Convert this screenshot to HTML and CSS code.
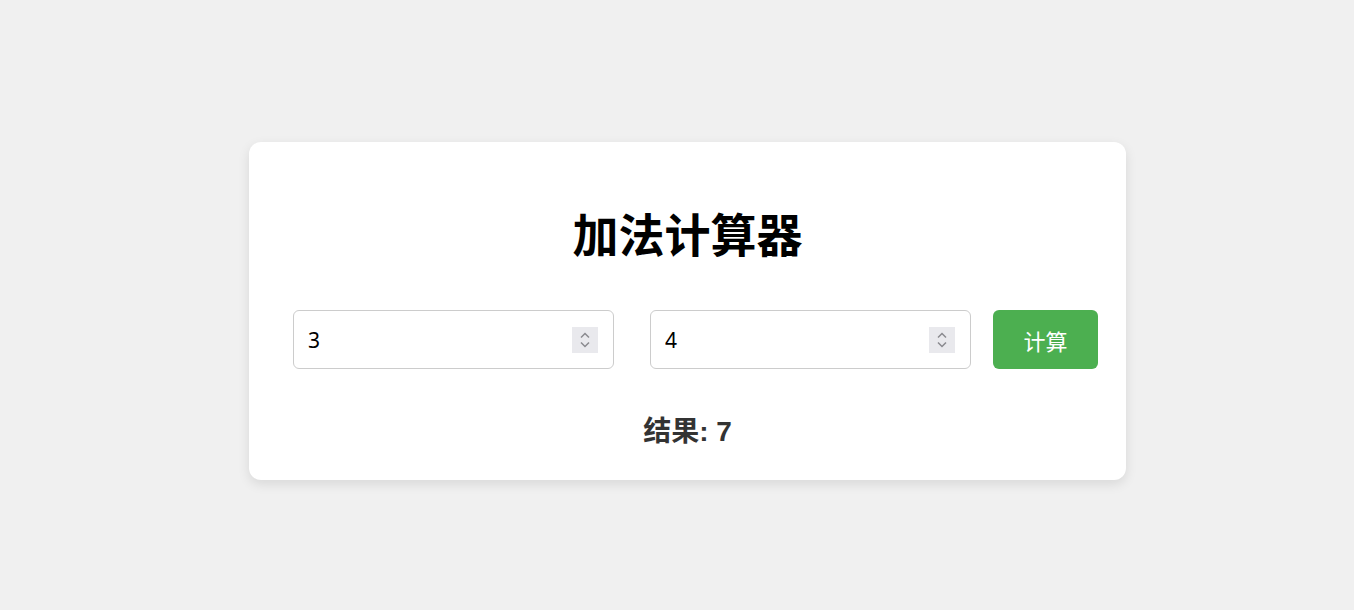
FILE: index.html
```html
<!DOCTYPE html>
<html lang="zh">
<head>
<meta charset="utf-8">
<title>加法计算器</title>
<link rel="stylesheet" href="styles.css">
</head>
<body>
<main class="page">
  <section class="card">
    <h1 class="title">加法计算器</h1>
    <div class="row">
      <div class="field">
        <input class="num" type="number" value="3">
        <span class="spin"><svg width="26" height="26" viewBox="0 0 26 26"><path d="M9 10.5 L13 6.5 L17 10.5" fill="none" stroke="#8a8a8f" stroke-width="1.5"/><path d="M9 15.5 L13 19.5 L17 15.5" fill="none" stroke="#8a8a8f" stroke-width="1.5"/></svg></span>
      </div>
      <div class="field field-second">
        <input class="num" type="number" value="4">
        <span class="spin"><svg width="26" height="26" viewBox="0 0 26 26"><path d="M9 10.5 L13 6.5 L17 10.5" fill="none" stroke="#8a8a8f" stroke-width="1.5"/><path d="M9 15.5 L13 19.5 L17 15.5" fill="none" stroke="#8a8a8f" stroke-width="1.5"/></svg></span>
      </div>
      <button class="btn" type="button">计算</button>
    </div>
    <p class="result">结果: 7</p>
  </section>
</main>
</body>
</html>
```

FILE: styles.css
```css
html, body {
  margin: 0;
  padding: 0;
}
body {
  background: #f0f0f0;
  font-family: "Noto Sans", "Noto Sans CJK SC", sans-serif;
  height: 610px;
  overflow: hidden;
}
.page {
  padding: 142px 0 0 249px;
}
.card {
  box-sizing: border-box;
  width: 877px;
  height: 338px;
  background: #ffffff;
  border-radius: 12px;
  box-shadow: 0 4px 12px rgba(0, 0, 0, 0.1);
  padding-top: 57px;
}
.title {
  margin: 0;
  text-align: center;
  font-family: "Noto Sans CJK SC", sans-serif;
  font-weight: 700;
  font-size: 46px;
  line-height: 66px;
  color: #000;
}
.row {
  display: flex;
  align-items: center;
  padding-left: 44px;
  margin-top: 45px;
}
.field {
  box-sizing: border-box;
  width: 321px;
  height: 59px;
  border: 1px solid #cccccc;
  border-radius: 6px;
  display: flex;
  align-items: center;
  padding: 0 15px 0 14px;
}
.field-second {
  margin-left: 36px;
}
.num {
  flex: 1;
  min-width: 0;
  border: none;
  outline: none;
  background: transparent;
  font-family: "Noto Sans", sans-serif;
  font-size: 21px;
  color: #000;
  padding: 0;
  -moz-appearance: textfield;
}
.num::-webkit-inner-spin-button,
.num::-webkit-outer-spin-button {
  -webkit-appearance: none;
  margin: 0;
}
.spin {
  width: 26px;
  height: 26px;
  background: #e9e9ed;
  display: flex;
}
.btn {
  margin-left: 22px;
  width: 105px;
  height: 59px;
  border: none;
  border-radius: 6px;
  background: #4caf50;
  color: #ffffff;
  font-family: "Noto Sans CJK SC", sans-serif;
  font-size: 22px;
  padding: 0;
}
.result {
  margin: 45px 0 0;
  text-align: center;
  font-family: "Liberation Sans", "Noto Sans CJK SC", sans-serif;
  font-weight: 700;
  font-size: 28px;
  line-height: 36px;
  color: #333333;
}
```
